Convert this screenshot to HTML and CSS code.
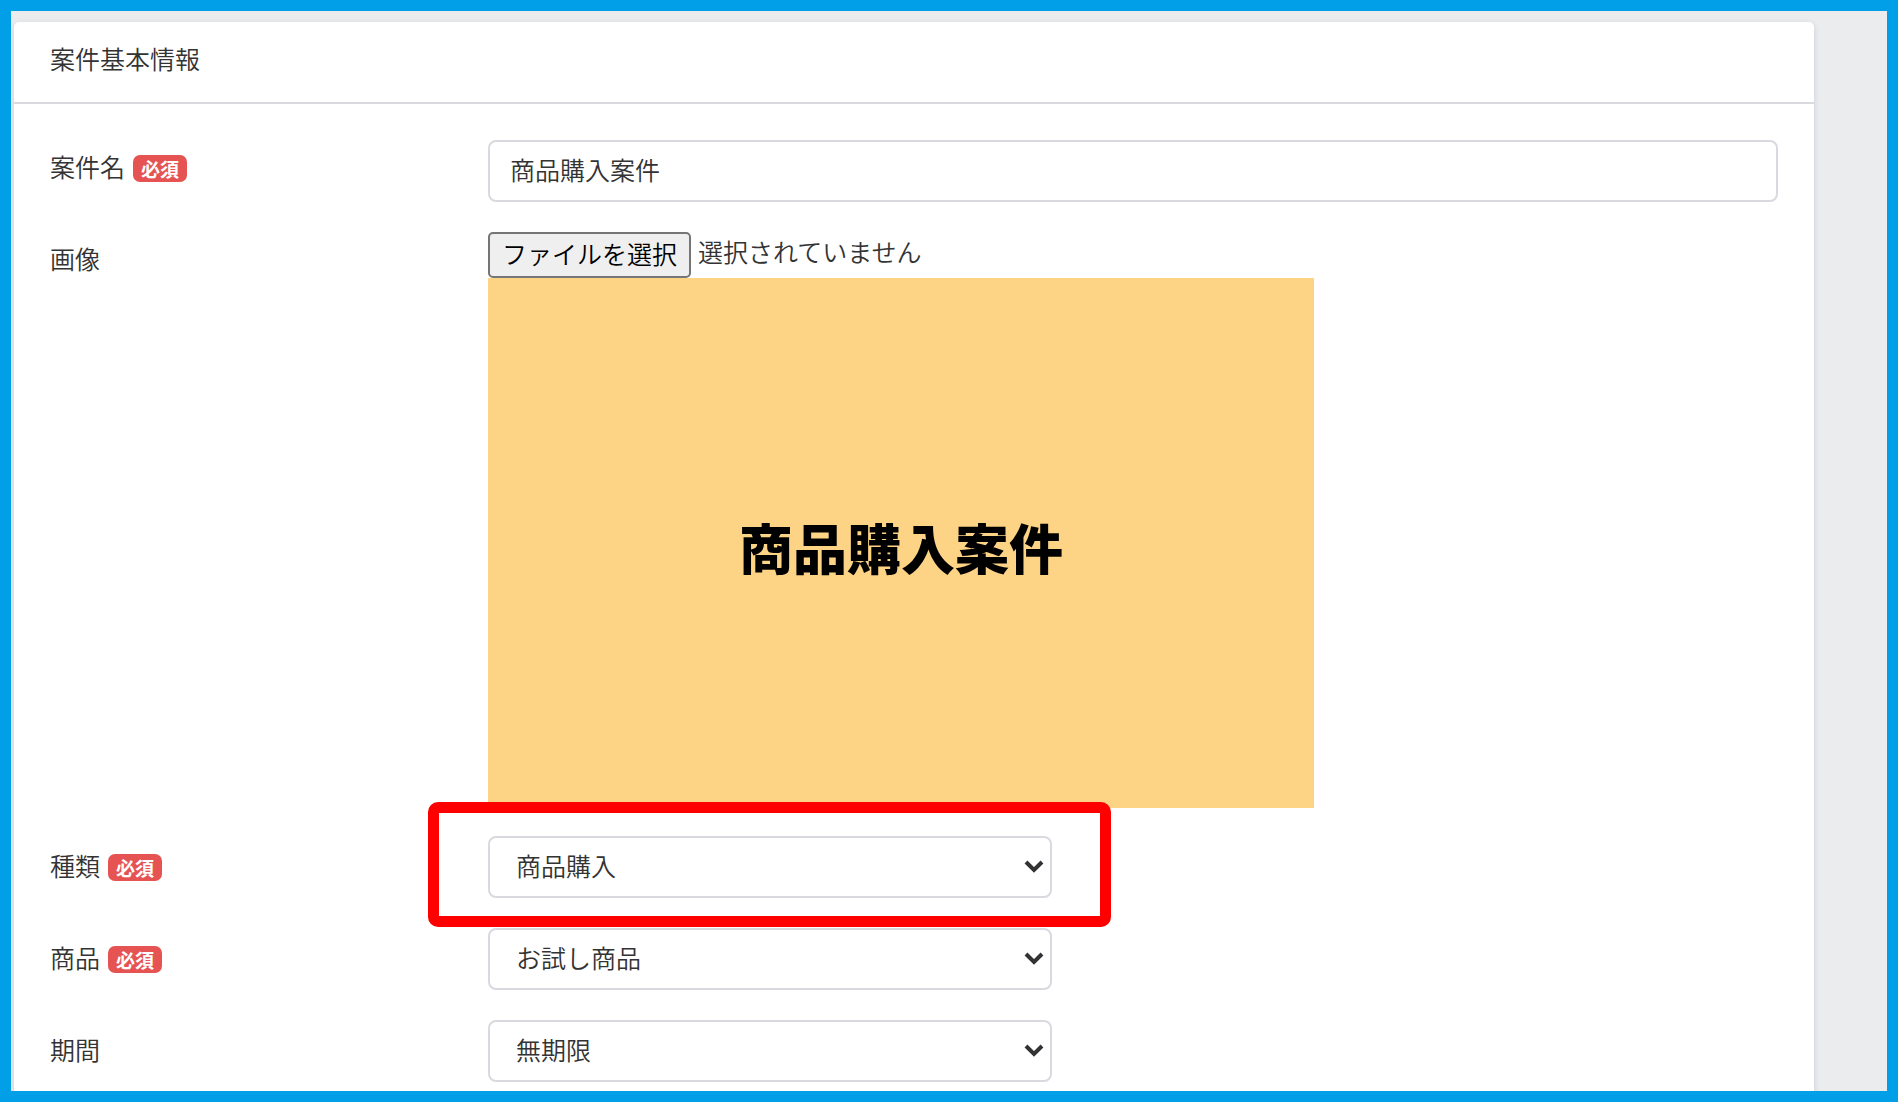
FILE: index.html
```html
<!DOCTYPE html>
<html lang="ja">
<head>
    <meta charset="UTF-8">
    <meta name="viewport" content="width=device-width, initial-scale=1.0">
    <title>案件基本情報</title>
    <link rel="stylesheet" href="styles.css">
</head>
<body>
    <main class="page">
        <form class="card">
            <h2 class="card-header">案件基本情報</h2>

            <div class="card-body">
                <!-- Name -->
                <div class="form-row">
                    <label class="form-label" for="name">案件名<span class="badge">必須</span></label>
                    <input class="form-control" type="text" id="name" name="name" value="商品購入案件">
                </div>

                <!-- Image -->
                <div class="form-row">
                    <label class="form-label" for="image">画像</label>
                    <div>
                        <div class="file">
                            <input class="file-input" type="file" id="image" name="image">
                            <label class="file-button" for="image">ファイルを選択</label>
                            <span>選択されていません</span>
                        </div>
                        <div class="preview">商品購入案件</div>
                    </div>
                </div>

                <!-- Type -->
                <div class="form-row center">
                    <label class="form-label" for="type">種類<span class="badge">必須</span></label>
                    <div class="select">
                        <select class="form-control" id="type" name="type">
                            <option>商品購入</option>
                        </select>
                        <svg class="arrow" viewBox="0 0 20 14"><path d="M2 2 L10 10 L18 2"/></svg>
                        <div class="highlight"></div>
                    </div>
                </div>

                <!-- Product -->
                <div class="form-row center">
                    <label class="form-label" for="product">商品<span class="badge">必須</span></label>
                    <div class="select">
                        <select class="form-control" id="product" name="product">
                            <option>お試し商品</option>
                        </select>
                        <svg class="arrow" viewBox="0 0 20 14"><path d="M2 2 L10 10 L18 2"/></svg>
                    </div>
                </div>

                <!-- Period -->
                <div class="form-row center">
                    <label class="form-label" for="period">期間</label>
                    <div class="select">
                        <select class="form-control" id="period" name="period">
                            <option>無期限</option>
                        </select>
                        <svg class="arrow" viewBox="0 0 20 14"><path d="M2 2 L10 10 L18 2"/></svg>
                    </div>
                </div>
            </div>
        </form>
    </main>
</body>
</html>
```
FILE: styles.css
```css
* {
    box-sizing: border-box;
}

body {
    margin: 0;
    font-family: "Noto Sans CJK JP", sans-serif;
    font-size: 25px;
    font-weight: 350;
    line-height: 36px;
    color: #333;
}

.page {
    height: 100vh;
    overflow: hidden;
    padding: 11px 73px 0 3px;
    border: 11px solid #009fe8;
    background-color: #ebecee;
}

.card {
    background-color: #fff;
    border-radius: 5px;
    box-shadow: 0 2px 6px rgba(40, 50, 90, 0.16);
}

.card-header {
    margin: 0;
    padding: 18px 36px 26px;
    border-bottom: 2px solid #d9d9e0;
    font-size: 25px;
    font-weight: inherit;
}

.card-body {
    display: flex;
    flex-direction: column;
    gap: 30px;
    padding: 36px;
}

.form-row {
    display: grid;
    grid-template-columns: 1fr 3fr;
    gap: 8px;
    align-items: start;
}

.form-row.center {
    align-items: center;
}

.form-label {
    display: flex;
    align-items: center;
    gap: 8px;
    padding-top: 8px;
}

.center .form-label {
    padding: 0 0 4px;
}

.badge {
    margin-top: 4px;
    padding: 0 8px;
    border-radius: 7px;
    background-color: #e55353;
    color: #fff;
    font-size: 19px;
    font-weight: 700;
    line-height: 27px;
}

.form-control {
    display: block;
    width: 100%;
    height: 62px;
    padding: 0 20px 4px;
    border: 2px solid #d9d9e0;
    border-radius: 8px;
    background-color: #fff;
    color: #333;
    font: inherit;
}

.select {
    position: relative;
    max-width: 564px;
}

.select .form-control {
    padding: 0 26px 4px;
    appearance: none;
}

.arrow {
    position: absolute;
    top: 24px;
    right: 8px;
    width: 20px;
    height: 14px;
    fill: none;
    stroke: #333;
    stroke-width: 4;
    pointer-events: none;
}

.highlight {
    position: absolute;
    top: -34px;
    right: -59px;
    bottom: -29px;
    left: -60px;
    border: 11px solid #f00;
    border-radius: 10px;
    pointer-events: none;
}

.file {
    display: flex;
    gap: 7px;
    line-height: 38px;
}

.file-input {
    position: absolute;
    opacity: 0;
    pointer-events: none;
}

.file-button {
    padding: 0 12px 4px;
    border: 2px solid #767676;
    border-radius: 5px;
    background-color: #efefef;
    color: #000;
}

.preview {
    display: flex;
    align-items: center;
    justify-content: center;
    max-width: 826px;
    height: 530px;
    margin-bottom: -2px;
    padding-top: 8px;
    background-color: #fdd485;
    color: #000;
    font-size: 54px;
    font-weight: 900;
}
```
